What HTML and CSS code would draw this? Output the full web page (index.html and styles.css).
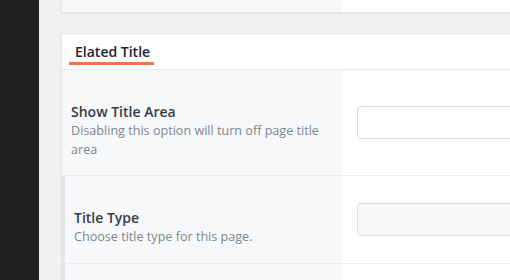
FILE: index.html
```html
<!DOCTYPE html>
<html lang="en">
<head>
    <meta charset="UTF-8">
    <title>Elated Title</title>
    <link rel="stylesheet" href="styles.css">
</head>
<body>
    <div class="layout">
        <aside class="sidebar"></aside>

        <main class="content">
            <!-- previous meta box, scrolled up -->
            <section class="card card-prev">
                <div class="row row-stub">
                    <div class="row-label"></div>
                    <div class="row-field"></div>
                </div>
            </section>

            <section class="card">
                <header class="card-head">
                    <h3 class="card-title">Elated Title</h3>
                </header>

                <div class="row">
                    <div class="row-label">
                        <h4 class="field-name">Show Title Area</h4>
                        <p class="field-desc">Disabling this option will turn off page title area</p>
                    </div>
                    <div class="row-field">
                        <div class="field-input"></div>
                    </div>
                </div>

                <div class="row row-dep">
                    <div class="row-label">
                        <h4 class="field-name">Title Type</h4>
                        <p class="field-desc">Choose title type for this page.</p>
                    </div>
                    <div class="row-field">
                        <div class="field-input field-select"></div>
                    </div>
                </div>

                <div class="row row-dep row-last">
                    <div class="row-label"></div>
                    <div class="row-field"></div>
                </div>
            </section>
        </main>
    </div>
</body>
</html>
```

FILE: styles.css
```css
html, body {
    margin: 0;
    padding: 0;
    height: 100%;
}
body {
    font-family: "Open Sans", "Liberation Sans", Arial, sans-serif;
    background-color: #f1f1f1;
    overflow: hidden;
}
.layout {
    display: flex;
    height: 100%;
}
.sidebar {
    width: 39px;
    flex-shrink: 0;
    background-color: #212121;
}
.content {
    flex: 1;
    padding-left: 22px;
    overflow: hidden;
}
.card {
    width: 640px;
    background-color: #fff;
    border: 1px solid #e3e3e3;
    border-right: none;
    box-shadow: 0 1px 1px rgba(0, 0, 0, 0.03);
    margin-bottom: 20px;
}
.card-prev {
    border-top: none;
}
.card-head {
    height: 36px;
    display: flex;
    align-items: flex-end;
    padding: 0 0 4px 7px;
    box-sizing: border-box;
    border-bottom: 1px solid #ebebeb;
}
.card-title {
    margin: 0;
    padding: 0 4px 0 6px;
    font-size: 14px;
    font-weight: 600;
    line-height: 20px;
    color: #1b2333;
    border-bottom: 3px solid #ff7145;
}
.row {
    display: grid;
    grid-template-columns: 280px 1fr;
    border-bottom: 1px solid #ebebeb;
}
.row-stub {
    height: 12px;
    border-bottom: none;
}
.row-stub .row-label {
    padding: 0;
}
.row-last {
    height: 40px;
    border-bottom: none;
}
.row-label {
    background-color: #f7f8fa;
    padding: 32px 10px 16px 9px;
}
.row-dep .row-label {
    border-left: 3px solid #e4e7ef;
}
.row-field {
    display: flex;
    align-items: center;
    padding: 0 0 0 15px;
}
.field-name {
    margin: 0;
    font-size: 14px;
    font-weight: 600;
    line-height: 20px;
    color: #343c49;
}
.field-desc {
    margin: 0;
    font-size: 12.6px;
    line-height: 18.5px;
    color: #80868f;
}
.field-input {
    width: 100%;
    height: 33px;
    box-sizing: border-box;
    border: 1px solid #dcdcdc;
    border-radius: 4px;
    background-color: #fff;
}
.field-select {
    background-color: #f7f8fa;
}
```
